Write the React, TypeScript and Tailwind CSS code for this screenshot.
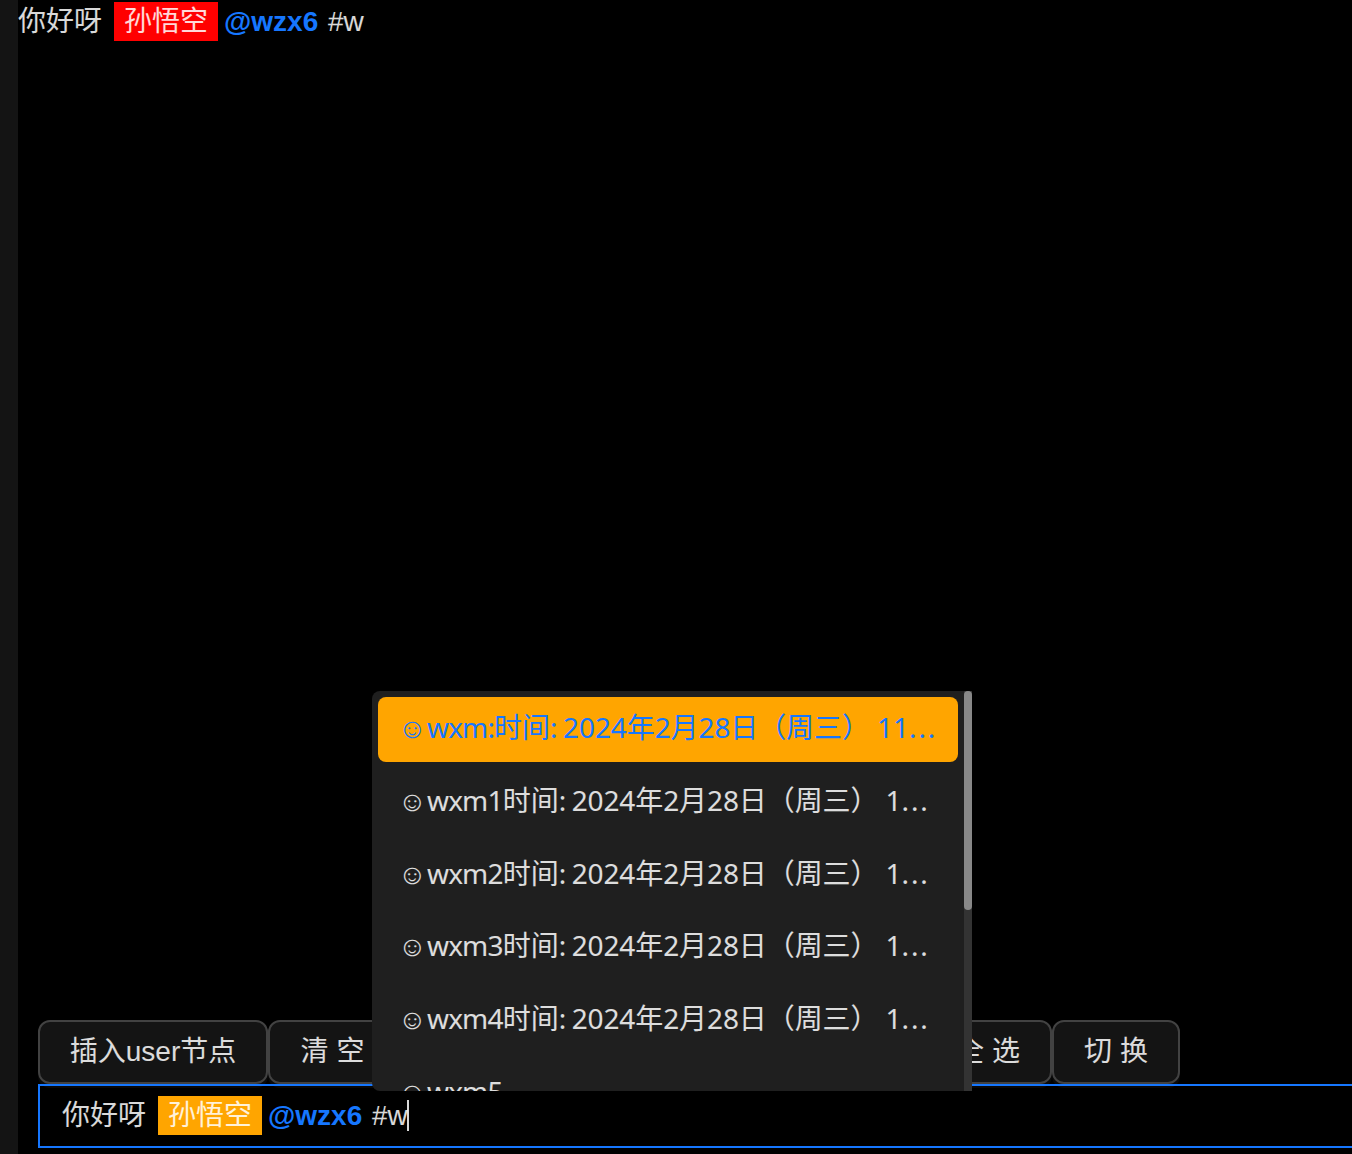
import React from "react";

const items = [
  { name: "wxm:", date: "2024年2月28日（周三） ", tail: "11...", active: true },
  { name: "wxm1", date: "2024年2月28日（周三） ", tail: "1..." },
  { name: "wxm2", date: "2024年2月28日（周三） ", tail: "1..." },
  { name: "wxm3", date: "2024年2月28日（周三） ", tail: "1..." },
  { name: "wxm4", date: "2024年2月28日（周三） ", tail: "1..." },
  { name: "wxm5", date: "", tail: "" },
];

function Message({ markClass, caret = false }: { markClass: string; caret?: boolean }) {
  return (
    <div className="flex h-[39px] items-center whitespace-pre leading-[39px]">
      <span>你好呀</span>
      <span className={`ml-3 h-[39px] px-[10px] ${markClass}`}>孙悟空</span>
      <span className="ml-[6px] font-bold text-[#1677ff]">@wzx6</span>
      <span className="ml-[9.75px]">#w</span>
      {caret && <span className="-ml-px h-[31px] w-[2px] bg-white/85" />}
    </div>
  );
}

function Button({ className, children }: { className: string; children: React.ReactNode }) {
  return (
    <button
      className={`flex h-16 shrink-0 items-center justify-center whitespace-pre rounded-xl border-2 border-[#424242] bg-[#141414] shadow-[0_4px_0_rgba(255,255,255,0.04)] ${className}`}
    >
      {children}
    </button>
  );
}

function MentionMenu() {
  return (
    <div className="absolute left-[372px] top-[691px] flex h-[400px] w-[600px] overflow-hidden rounded-l-lg bg-[#1f1f1f] font-['Noto_Sans','Noto_Sans_CJK_SC',sans-serif]">
      <ul className="flex flex-1 flex-col gap-2 p-1.5">
        {items.map((item) => (
          <li
            key={item.name}
            className={`flex h-[64.65px] shrink-0 items-center whitespace-pre rounded-lg pb-[4px] pl-5 ${
              item.active ? "bg-[#ffa500] text-[#1677ff]" : ""
            }`}
          >
            <span className="w-[29px] pt-[4px] font-['Liberation_Sans']">☺</span>
            <span className="tracking-[-0.85px]">{item.name}</span>
            {item.date && (
              <>
                <span className="w-[69px]">时间:</span>
                <span className="tracking-[-0.1px]">{item.date}</span>
              </>
            )}
            <span>{item.tail.replace("...", "")}</span>
            {item.tail && <span className="tracking-[1.9px]">...</span>}
          </li>
        ))}
      </ul>
      <div className="w-2 bg-[#333333]">
        <div className="h-[219px] rounded-full bg-[#888888]" />
      </div>
    </div>
  );
}

export default function App() {
  return (
    <div className="relative flex h-[1154px] w-[1352px] overflow-hidden bg-black font-['Liberation_Sans','Noto_Sans_CJK_SC',sans-serif] text-[28px] text-white/85">
      <aside className="w-[18px] shrink-0 bg-[#141414]" />
      <main className="flex min-w-0 flex-1 flex-col">
        <div className="h-[1020px] shrink-0 pt-[2px]">
          <Message markClass="bg-[#ff0000]" />
        </div>
        <div className="flex h-16 shrink-0 pl-5">
          <Button className="w-[230px]">插入user节点</Button>
          <Button className="w-32 pl-px">清 空</Button>
          <div className="w-[528px] shrink-0" />
          <Button className="w-32">全 选</Button>
          <Button className="w-32">切 换</Button>
        </div>
        <div className="relative ml-5 h-16 shrink-0 border-2 border-r-0 border-[#1677ff] pl-[22px] pt-[10px]">
          <Message markClass="bg-[#ffa500]" caret />
        </div>
      </main>
      <MentionMenu />
    </div>
  );
}
